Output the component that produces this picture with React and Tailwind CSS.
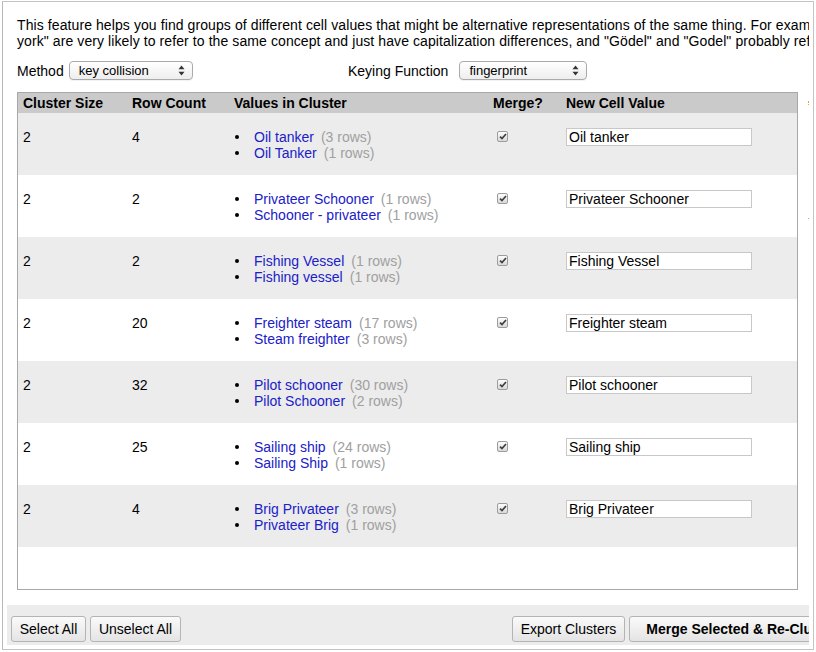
import React from "react";

const clusters = [
  { size: 2, rows: 4, values: [["Oil tanker", 3], ["Oil Tanker", 1]], next: "Oil tanker" },
  { size: 2, rows: 2, values: [["Privateer Schooner", 1], ["Schooner - privateer", 1]], next: "Privateer Schooner" },
  { size: 2, rows: 2, values: [["Fishing Vessel", 1], ["Fishing vessel", 1]], next: "Fishing Vessel" },
  { size: 2, rows: 20, values: [["Freighter steam", 17], ["Steam freighter", 3]], next: "Freighter steam" },
  { size: 2, rows: 32, values: [["Pilot schooner", 30], ["Pilot Schooner", 2]], next: "Pilot schooner" },
  { size: 2, rows: 25, values: [["Sailing ship", 24], ["Sailing Ship", 1]], next: "Sailing ship" },
  { size: 2, rows: 4, values: [["Brig Privateer", 3], ["Privateer Brig", 1]], next: "Brig Privateer" },
];

function SelectArrows() {
  return (
    <svg width="7" height="11" viewBox="0 0 7 11">
      <path d="M3.5 0.5 L6.5 4.3 L0.5 4.3 Z" fill="#333" />
      <path d="M3.5 10.5 L6.5 6.7 L0.5 6.7 Z" fill="#333" />
    </svg>
  );
}

function FakeSelect({ value, className }) {
  return (
    <div
      className={
        "flex items-center justify-between h-[19px] rounded-[4px] border border-[#aaaaaa] bg-linear-to-b from-white to-[#eeeeee] pl-[9px] pr-[7px] text-[13px] text-black shadow-[0_1px_0_rgba(0,0,0,0.05)] " +
        className
      }
    >
      <span>{value}</span>
      <SelectArrows />
    </div>
  );
}

function CheckMark() {
  return (
    <span className="mt-[2px] ml-[9px] flex h-[11px] w-[11px] items-center justify-center rounded-[2px] border border-[#9c9c9c] bg-linear-to-b from-[#fdfdfd] to-[#d9d9d9]">
      <svg width="8" height="7" viewBox="0 0 8 7">
        <path d="M1 3.6 L3 5.6 L7 1" fill="none" stroke="#404040" strokeWidth="1.7" />
      </svg>
    </span>
  );
}

function Button({ children, className = "" }) {
  return (
    <button
      className={
        "h-[26px] rounded-[3px] border border-[#b4b4b4] bg-linear-to-b from-[#fafafa] to-[#e4e4e4] text-[14px] text-black " +
        className
      }
    >
      {children}
    </button>
  );
}

export default function App() {
  return (
    <div className="relative h-[652px] w-[816px] overflow-hidden bg-white pl-[2px] pt-[1px] font-['Liberation_Sans',Arial,sans-serif] text-[14px] leading-4 text-black">
      <div className="flex h-[649px] w-[812px] flex-col border border-[#c4c4c4] border-l-[#b8b8b8] pr-[4px]">
        <div className="flex h-full flex-col overflow-hidden p-[4px]">
          {/* body */}
          <div className="flex flex-1 flex-col pl-[10px] pt-[11px]">
            <div className="whitespace-nowrap tracking-[0.09px]">
              <div>
                This feature helps you find groups of different cell values that might be alternative representations of the same thing. For example, the two strings "New York" and "new
              </div>
              <div>
                york" are very likely to refer to the same concept and just have capitalization differences, and "Gödel" and "Godel" probably refer to the same person.
              </div>
            </div>

            <div className="mt-[12px] flex items-center">
              <div className="flex w-[331px] items-center">
                <span>Method</span>
                <FakeSelect value="key collision" className="ml-[5px] w-[124px]" />
              </div>
              <div className="flex items-center">
                <span>Keying Function</span>
                <FakeSelect value="fingerprint" className="ml-[11px] w-[128px]" />
              </div>
            </div>

            <div className="mt-[12px] h-[498px] w-[781px] border border-[#a8a8a8]">
              <div className="grid h-[20px] grid-cols-[109px_102px_259px_73px_1fr] items-center bg-[#cacaca] font-bold">
                <div className="pl-[5px]">Cluster Size</div>
                <div className="pl-[5px]">Row Count</div>
                <div className="pl-[5px]">Values in Cluster</div>
                <div className="pl-[5px]">Merge?</div>
                <div className="pl-[5px]">New Cell Value</div>
              </div>
              {clusters.map((c, i) => (
                <div
                  key={i}
                  className={
                    "grid h-[62px] grid-cols-[109px_102px_259px_73px_1fr] pt-4 " +
                    (i % 2 === 0 ? "bg-[#ececec]" : "bg-white")
                  }
                >
                  <div className="pl-[5px]">{c.size}</div>
                  <div className="pl-[5px]">{c.rows}</div>
                  <ul className="pl-[5px]">
                    {c.values.map(([v, n]) => (
                      <li key={v} className="flex items-center whitespace-nowrap">
                        <span className="ml-[1px] mr-[15px] h-[4px] w-[4px] rounded-full bg-black" />
                        <span className="text-[#2020c8]">{v}</span>
                        <span className="ml-[7px] text-[#a0a0a0]">({n} rows)</span>
                      </li>
                    ))}
                  </ul>
                  <div>
                    <CheckMark />
                  </div>
                  <div className="pl-[5px]">
                    <div className="-mt-[1px] flex h-[18px] w-[186px] items-center border border-[#c8c8c8] bg-white pl-[2px]">
                      {c.next}
                    </div>
                  </div>
                </div>
              ))}
            </div>
          </div>

          {/* footer */}
          <div className="mt-[15px] flex h-[40px] w-[900px] shrink-0 items-end bg-[#ececec] pb-[3px] pl-[4px]">
            <Button className="w-[75px]">Select All</Button>
            <Button className="ml-[4px] w-[91px]">Unselect All</Button>
            <Button className="ml-[331px] w-[113px]">Export Clusters</Button>
            <Button className="ml-[4px] w-[226px] font-bold">Merge Selected &amp; Re-Cluster</Button>
          </div>
        </div>
      </div>

      {/* stray orange marks at the right edge */}
      <span className="absolute left-[808px] top-[101px] h-[2px] w-[1px] bg-[#f0a030]" />
      <span className="absolute left-[808px] top-[104px] h-[1px] w-[1px] bg-[#f0a030]" />
      <span className="absolute left-[808px] top-[218px] h-[1px] w-[1px] bg-[#f0a030]" />
    </div>
  );
}
